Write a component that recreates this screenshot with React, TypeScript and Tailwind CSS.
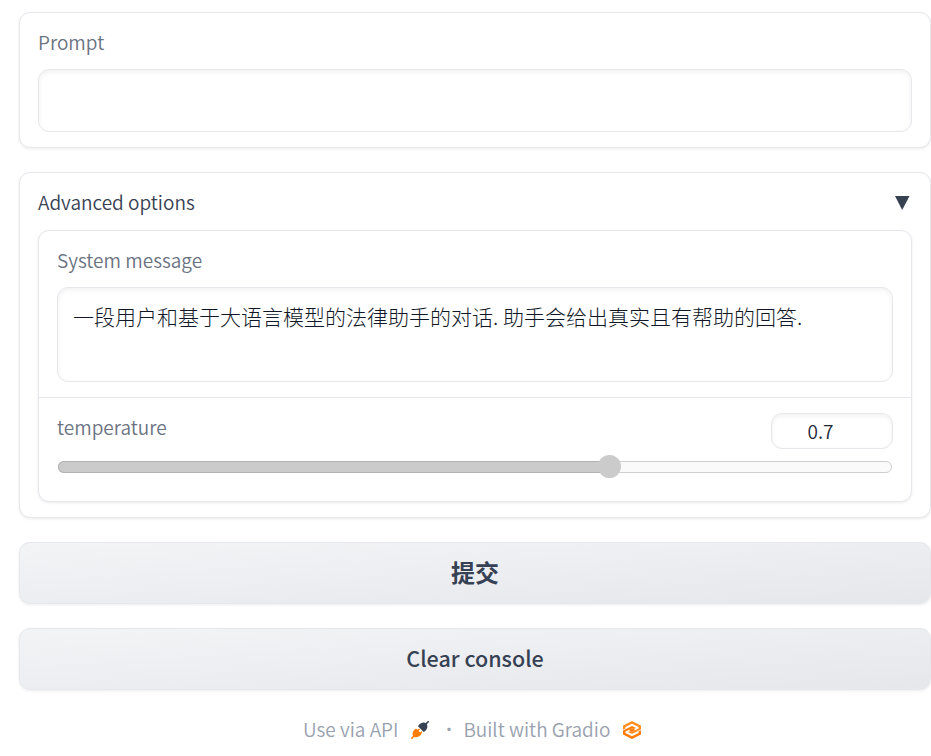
import React, { useState } from "react";

const card =
  "rounded-[11px] border border-gray-200 bg-white shadow-[0_1px_3px_0_rgba(0,0,0,0.08)]";
const field =
  "block w-full resize-none rounded-[11px] border border-gray-200 bg-white shadow-[inset_0_2px_5px_0_rgba(0,0,0,0.06)] outline-none";
const button =
  "flex h-[62px] w-full items-center justify-center rounded-[11px] border border-gray-200 bg-linear-to-br from-gray-100 to-gray-200 text-gray-700 shadow-[0_1px_3px_0_rgba(0,0,0,0.08)]";

function PlugIcon() {
  return (
    <svg width="18" height="18" viewBox="0 0 18 18" className="mt-[2px] ml-[13px] shrink-0">
      <path d="M0.8 17.2 3 15" stroke="#ff7c00" strokeWidth="1.6" strokeLinecap="round" />
      <path
        d="M2.3 15.4C0.8 12.8 1.6 10.3 3.7 8.5L5 7.4 6.3 8.7 8 7.4 9 8.5 7.6 10.1 9.1 11.5 10.7 10.1 11.2 11.2 10.4 13C8.9 15.8 5 17.3 2.3 15.4Z"
        fill="#ff7c00"
      />
      <path d="M15 3 17.2 0.8" stroke="#374151" strokeWidth="1.6" strokeLinecap="round" />
      <path d="M7.8 3.9C9.7 1.6 13 0.5 15.5 2.4 17.3 5.3 16.1 8.3 13.8 10.2L12.7 11 7 5.2Z" fill="#374151" />
    </svg>
  );
}

function GradioIcon() {
  return (
    <svg width="18" height="18" viewBox="0 0 18 18" fill="none" className="mt-[2px] ml-[13px] shrink-0">
      <path d="M0 4.5 9 0 18 4.5V8.6L9 13.1 5 11.1 7.4 9.9 9 10.7 15.6 7.4V6L9 2.7 2.4 6V7.6L0 8.8Z" fill="#ff8f20" />
      <path d="M18 13.5 9 18 0 13.5V9.4L9 4.9 13 6.9 10.6 8.1 9 7.3 2.4 10.6V12L9 15.3 15.6 12V10.4L18 9.2Z" fill="#ff7c00" />
      <path d="M5.6 9 9 7.3 12.4 9 9 10.7Z" fill="#ff7c00" />
    </svg>
  );
}

export default function App() {
  const [temperature, setTemperature] = useState("0.7");
  const percent = ((Number(temperature) - 0.039) / 1) * 100;

  return (
    <main className="flex h-[756px] flex-col gap-6 overflow-hidden bg-white pt-3 pl-[19px] font-['Noto_Sans_CJK_SC',sans-serif] text-[19px] font-[350]">
      <section className={`${card} h-[136px] shrink-0 px-[18px]`}>
        <label className="flex h-14 items-center pt-[3px] text-gray-500">Prompt</label>
        <textarea className={`${field} h-[63px]`} />
      </section>

      <section className={`${card} h-[346px] shrink-0 px-[18px]`}>
        <header className="flex h-[57px] items-center justify-between pt-px text-gray-700">
          <span>Advanced options</span>
          <svg width="15" height="14" viewBox="0 0 15 14" className="mt-[2px] mr-[2px]">
            <path d="M0 0H14.5L7.2 14Z" fill="#374151" />
          </svg>
        </header>

        <div className={`${card} h-[272px]`}>
          <div className="h-[167px] border-b border-gray-200 px-[18px]">
            <label className="flex h-14 items-center pt-[2px] text-gray-500">System message</label>
            <textarea
              className={`${field} h-[95px] px-[15px] pt-[13px] text-[21px] leading-[31px] font-light text-gray-900`}
              defaultValue="一段用户和基于大语言模型的法律助手的对话. 助手会给出真实且有帮助的回答."
            />
          </div>
          <div className="px-[18px] pt-[15px]">
            <div className="flex h-9 items-start justify-between">
              <label className="leading-[27px] text-gray-500">temperature</label>
              <input
                value={temperature}
                onChange={(e) => setTemperature(e.target.value)}
                className="h-9 w-[122px] rounded-[11px] border border-gray-200 pr-[23px] pb-[2px] text-center text-gray-800 shadow-[inset_0_2px_5px_0_rgba(0,0,0,0.06)] outline-none"
              />
            </div>
            <div className="mx-px mt-3 flex h-3 items-center rounded-full border border-[#cfcfcf] bg-[#fafafa]">
              <div
                className="-ml-px h-3 shrink-0 rounded-l-full border border-r-0 border-[#b2b2b2] bg-[#cbcbcb]"
                style={{ width: `${percent}%` }}
              />
              <div className="-mt-px -ml-[10px] size-[23px] shrink-0 rounded-full bg-[#cbcbcb]" />
            </div>
          </div>
        </div>
      </section>

      <button className={`${button} shrink-0 pb-[2px] text-2xl font-bold`}>提交</button>
      <button className={`${button} shrink-0 pb-[2px] text-[21.5px] font-medium`}>Clear console</button>

      <footer className="-mt-px flex h-8 shrink-0 items-center pl-[284px] whitespace-nowrap text-gray-400">
        <span>Use via API</span>
        <PlugIcon />
        <span className="mr-[9px] ml-[14px] w-[11px] text-center font-['Open_Sans',sans-serif] font-bold">·</span>
        <span>Built with Gradio</span>
        <GradioIcon />
      </footer>
    </main>
  );
}
